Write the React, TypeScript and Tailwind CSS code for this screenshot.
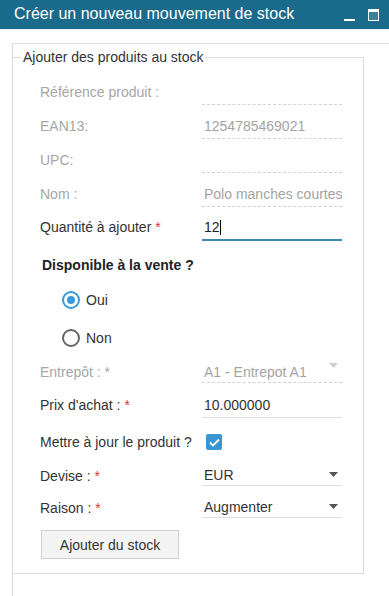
import React from "react";

const Arrow = ({ color, className }: { color: string; className?: string }) => (
  <svg width="9" height="5" viewBox="0 0 9 5" className={className}>
    <path d="M0 0h9L4.5 5z" fill={color} />
  </svg>
);

type FieldProps = {
  label: string;
  req?: boolean;
  dis?: boolean;
  h: string;
  lpb: string;
  vpb: string;
  line: string;
  children?: React.ReactNode;
};

function Field({ label, req, dis, h, lpb, vpb, line, children }: FieldProps) {
  return (
    <div className={`flex items-end ${h}`}>
      <div className={`w-[162px] shrink-0 leading-[20px] whitespace-nowrap ${lpb} ${dis ? "text-[#a6a6a6]" : "text-[#333]"}`}>
        {label}
        {req && <span className={dis ? "text-[#a6a6a6]" : "text-[#e2343b]"}> *</span>}
      </div>
      <div className={`w-[140px] h-full flex items-end justify-between overflow-hidden whitespace-nowrap leading-[20px] pl-[2px] ${line} ${vpb}`}>
        {children}
      </div>
    </div>
  );
}

export default function App() {
  return (
    <div className="w-[389px] h-[596px] overflow-hidden bg-white text-[14px] text-[#333]" style={{ fontFamily: '"Liberation Sans", Arial, sans-serif' }}>
      <div className="h-[29px] bg-[#1a6a8b] flex items-start pl-[14px] pr-[10px]">
        <span className="text-white text-[16px] leading-[20px] mt-[4px]">Créer un nouveau mouvement de stock</span>
        <div className="ml-auto flex items-start">
          <div className="w-[11px] h-[2px] bg-white mt-[19px]" />
          <svg width="11" height="12" viewBox="0 0 11 12" className="ml-[13px] mt-[9px]">
            <rect x="0.5" y="0.5" width="10" height="11" fill="rgba(255,255,255,0.15)" stroke="#fff" strokeWidth="1" />
            <rect x="0" y="0" width="11" height="3" fill="#fff" />
          </svg>
        </div>
      </div>
      <div className="h-px bg-[#eaf4f8]" />
      <div className="mt-[13px] ml-[12px] border-l border-t border-[#dedede] pt-[3px] pb-[22px]">
        <fieldset className="-ml-px w-[352px] border border-[#dcdcdc] pb-[14px]">
          <legend className="ml-[8px] px-[2px] text-[14px] leading-[20px] text-[#333]">Ajouter des produits au stock</legend>
          <div className="pl-[27px] mt-[4px]">
            <Field label="Référence produit :" dis h="h-[34px]" lpb="pb-[3px]" vpb="pb-[2px]" line="border-b border-dashed border-[#d2d2d2]" />
            <Field label="EAN13:" dis h="h-[34px]" lpb="pb-[3px]" vpb="pb-[2px]" line="border-b border-dashed border-[#d2d2d2]">
              <span className="text-[#a3a3a3]">1254785469021</span>
            </Field>
            <Field label="UPC:" dis h="h-[34px]" lpb="pb-[3px]" vpb="pb-[2px]" line="border-b border-dashed border-[#d2d2d2]" />
            <Field label="Nom :" dis h="h-[34px]" lpb="pb-[3px]" vpb="pb-[2px]" line="border-b border-dashed border-[#d2d2d2]">
              <span className="text-[#a3a3a3]">Polo manches courtes</span>
            </Field>
            <Field label="Quantité à ajouter" req h="h-[34px]" lpb="pb-[4px]" vpb="pb-[2px]" line="border-b-2 border-[#3a89b4]">
              <span className="text-[#222] flex items-center">
                12<span className="inline-block w-px h-[15px] bg-black" />
              </span>
            </Field>

            <div className="mt-[14px] pl-[2px] font-bold leading-[20px] text-[#222]">Disponible à la vente ?</div>
            <div className="mt-[6px]">
              <div className="h-[38px] flex items-center pl-[22px]">
                <span className="w-[18px] h-[18px] rounded-full border-2 border-[#3a9ad9] flex items-center justify-center">
                  <span className="w-[8px] h-[8px] rounded-full bg-[#3a9ad9]" />
                </span>
                <span className="ml-[6px] text-[#333]">Oui</span>
              </div>
              <div className="h-[38px] flex items-center pl-[22px]">
                <span className="w-[18px] h-[18px] rounded-full border-2 border-[#666]" />
                <span className="ml-[6px] text-[#333]">Non</span>
              </div>
            </div>

            <Field label="Entrepôt :" req dis h="h-[26px]" lpb="pb-[1px]" vpb="pb-0" line="border-b border-dashed border-[#d2d2d2]">
              <span className="text-[#a3a3a3]">A1 - Entrepot A1</span>
              <Arrow color="#cfcfcf" className="mb-[14px] mr-[4px] shrink-0" />
            </Field>
            <Field label="Prix d'achat :" req h="h-[35px]" lpb="pb-[3px]" vpb="pb-[2px]" line="border-b border-[#dedede]">
              <span className="text-[#333]">10.000000</span>
            </Field>
            <div className="mt-[16px] h-[16px] flex items-center">
              <div className="w-[162px] leading-[16px] text-[#333] whitespace-nowrap">Mettre à jour le produit ?</div>
              <span className="ml-[4px] w-[16px] h-[16px] rounded-[2px] bg-[#3a95d5] flex items-center justify-center">
                <svg width="11" height="9" viewBox="0 0 11 9">
                  <path d="M1 4.5l3 3L10 1.5" fill="none" stroke="#fff" strokeWidth="1.8" />
                </svg>
              </span>
            </div>
            <Field label="Devise :" req h="h-[36px]" lpb="pb-0" vpb="pb-0" line="border-b border-[#dedede]">
              <span className="text-[#333]">EUR</span>
              <Arrow color="#555" className="mb-[8px] mr-[4px] shrink-0" />
            </Field>
            <Field label="Raison :" req h="h-[32px]" lpb="pb-0" vpb="pb-0" line="border-b border-[#dedede]">
              <span className="text-[#333]">Augmenter</span>
              <Arrow color="#555" className="mb-[8px] mr-[4px] shrink-0" />
            </Field>
            <button className="mt-[12px] ml-[1px] w-[138px] h-[29px] border border-[#d0d0d0] bg-[#f4f4f4] text-[14px] text-[#333] leading-[20px]">
              Ajouter du stock
            </button>
          </div>
        </fieldset>
      </div>
    </div>
  );
}
